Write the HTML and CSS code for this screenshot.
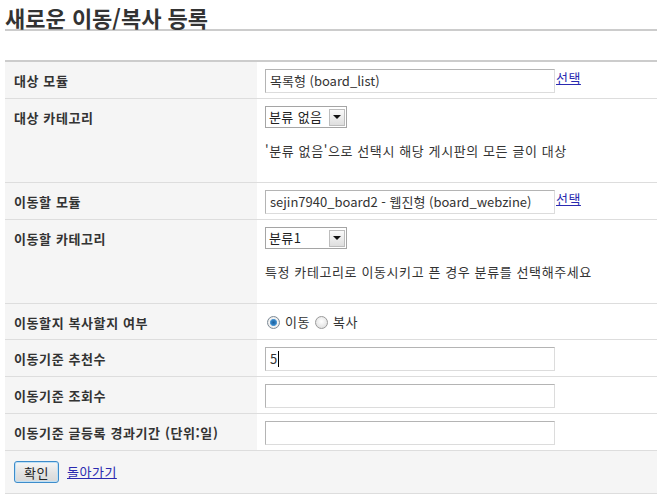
FILE: index.html
```html
<!DOCTYPE html>
<html lang="ko">
<head>
<meta charset="utf-8">
<title>새로운 이동/복사 등록</title>
<link rel="stylesheet" href="styles.css">
</head>
<body>
<h1 class="title">새로운 이동/복사 등록</h1>
<div class="form">
  <div class="row">
    <div class="th">대상 모듈</div>
    <div class="td"><div class="input">목록형 (board_list)</div><a class="link" href="#">선택</a></div>
  </div>
  <div class="row">
    <div class="th">대상 카테고리</div>
    <div class="td">
      <div class="select"><span class="sel-text">분류 없음</span><span class="sel-btn"><span class="tri"></span></span></div>
      <p class="desc">'분류 없음'으로 선택시 해당 게시판의 모든 글이 대상</p>
    </div>
  </div>
  <div class="row">
    <div class="th">이동할 모듈</div>
    <div class="td"><div class="input">sejin7940_board2 - 웹진형 (board_webzine)</div><a class="link" href="#">선택</a></div>
  </div>
  <div class="row">
    <div class="th">이동할 카테고리</div>
    <div class="td">
      <div class="select"><span class="sel-text">분류1</span><span class="sel-btn"><span class="tri"></span></span></div>
      <p class="desc">특정 카테고리로 이동시키고 픈 경우 분류를 선택해주세요</p>
    </div>
  </div>
  <div class="row">
    <div class="th">이동할지 복사할지 여부</div>
    <div class="td radios">
      <label class="opt"><span class="radio on"></span>이동</label>
      <label class="opt"><span class="radio"></span>복사</label>
    </div>
  </div>
  <div class="row">
    <div class="th">이동기준 추천수</div>
    <div class="td"><div class="input">5<span class="caret"></span></div></div>
  </div>
  <div class="row">
    <div class="th">이동기준 조회수</div>
    <div class="td"><div class="input"></div></div>
  </div>
  <div class="row">
    <div class="th">이동기준 글등록 경과기간 (단위:일)</div>
    <div class="td"><div class="input"></div></div>
  </div>
  <div class="actions">
    <button class="btn" type="button">확인</button>
    <a class="link" href="#">돌아가기</a>
  </div>
</div>
</body>
</html>
```
FILE: styles.css
```css
html, body {
  background: #fff;
}
body {
  margin: 0;
  padding: 5px 7px 0 5px;
  font-family: "Noto Sans CJK KR", sans-serif;
  font-size: 13px;
  color: #333;
}
.title {
  margin: 0;
  font-size: 22px;
  line-height: 24px;
  font-weight: bold;
  color: #333;
  border-bottom: 2px solid #ccc;
}
.form {
  margin-top: 29px;
  border-top: 2px solid #ccc;
}
.row {
  display: flex;
  border-bottom: 1px solid #ddd;
}
.th {
  width: 252px;
  flex: none;
  box-sizing: border-box;
  padding: 10px 9px 0;
  line-height: 18px;
  font-weight: bold;
  letter-spacing: 0.6px;
  color: #333;
  background: #f5f5f5;
}
.td {
  flex: 1;
  display: flex;
  flex-direction: column;
  align-items: flex-start;
  padding: 7px 8px 5px;
}
.td:has(.link) {
  flex-direction: row;
  align-items: flex-start;
}
.input {
  width: 290px;
  height: 24px;
  box-sizing: border-box;
  border: 1px solid;
  border-color: #b4b4b4 #dcdcdc #dcdcdc #b4b4b4;
  padding: 0 4px;
  line-height: 22px;
  color: #333;
  white-space: nowrap;
  overflow: hidden;
  display: flex;
  align-items: center;
}
.caret {
  display: inline-block;
  width: 1px;
  height: 16px;
  background: #000;
  margin-left: 1px;
}
.link {
  color: #2a2ab0;
  text-decoration: underline;
  line-height: 18px;
  letter-spacing: 0.5px;
  margin-left: 1px;
}
.select {
  width: 82px;
  height: 22px;
  box-sizing: border-box;
  border: 1px solid #a5a5a5;
  display: flex;
  align-items: center;
  justify-content: space-between;
  background: #fff;
}
.sel-text {
  padding-left: 3px;
  line-height: 18px;
  letter-spacing: 0.4px;
  color: #222;
}
.sel-btn {
  width: 16px;
  height: 17px;
  margin-right: 1px;
  box-sizing: border-box;
  border: 1px solid #bdbdbd;
  background: linear-gradient(#fafafa, #dedede);
  display: flex;
  align-items: center;
  justify-content: center;
}
.tri {
  width: 0;
  height: 0;
  border-left: 4px solid transparent;
  border-right: 4px solid transparent;
  border-top: 4px solid #111;
}
.desc {
  margin: 14px 0 17px;
  line-height: 18px;
  letter-spacing: 0.6px;
  color: #333;
}
.radios {
  flex-direction: row;
  align-items: center;
  padding: 9px 8px 8px 10px;
  gap: 5px;
}
.opt {
  display: flex;
  align-items: center;
  gap: 5px;
  line-height: 18px;
  letter-spacing: 0.5px;
  color: #333;
}
.radio {
  width: 13px;
  height: 13px;
  box-sizing: border-box;
  border-radius: 50%;
  border: 1px solid #9a9a9a;
  background: radial-gradient(circle at 50% 40%, #ffffff 0%, #e4e4e4 70%, #cfcfcf 100%);
}
.radio.on {
  border-color: #7d8a96;
  background: radial-gradient(circle at 50% 50%, #1e5f9c 0%, #2f7fc2 30%, #5a9fd6 42%, #f4f4f4 50%, #e0e0e0 100%);
}
.actions {
  display: flex;
  align-items: center;
  gap: 7px;
  padding: 10px 9px 10px;
  background: #f5f5f5;
  border-bottom: 1px solid #ddd;
}
.btn {
  width: 45px;
  height: 22px;
  padding: 0;
  font-family: "Noto Sans CJK KR", sans-serif;
  font-size: 13px;
  letter-spacing: 0.5px;
  color: #222;
  border: 1px solid #3d8ccb;
  border-radius: 3px;
  background: linear-gradient(#f7f7f7, #e2e2e2 55%, #d8d8d8);
  box-shadow: inset 0 0 0 1px #bfe0f5;
}
```
